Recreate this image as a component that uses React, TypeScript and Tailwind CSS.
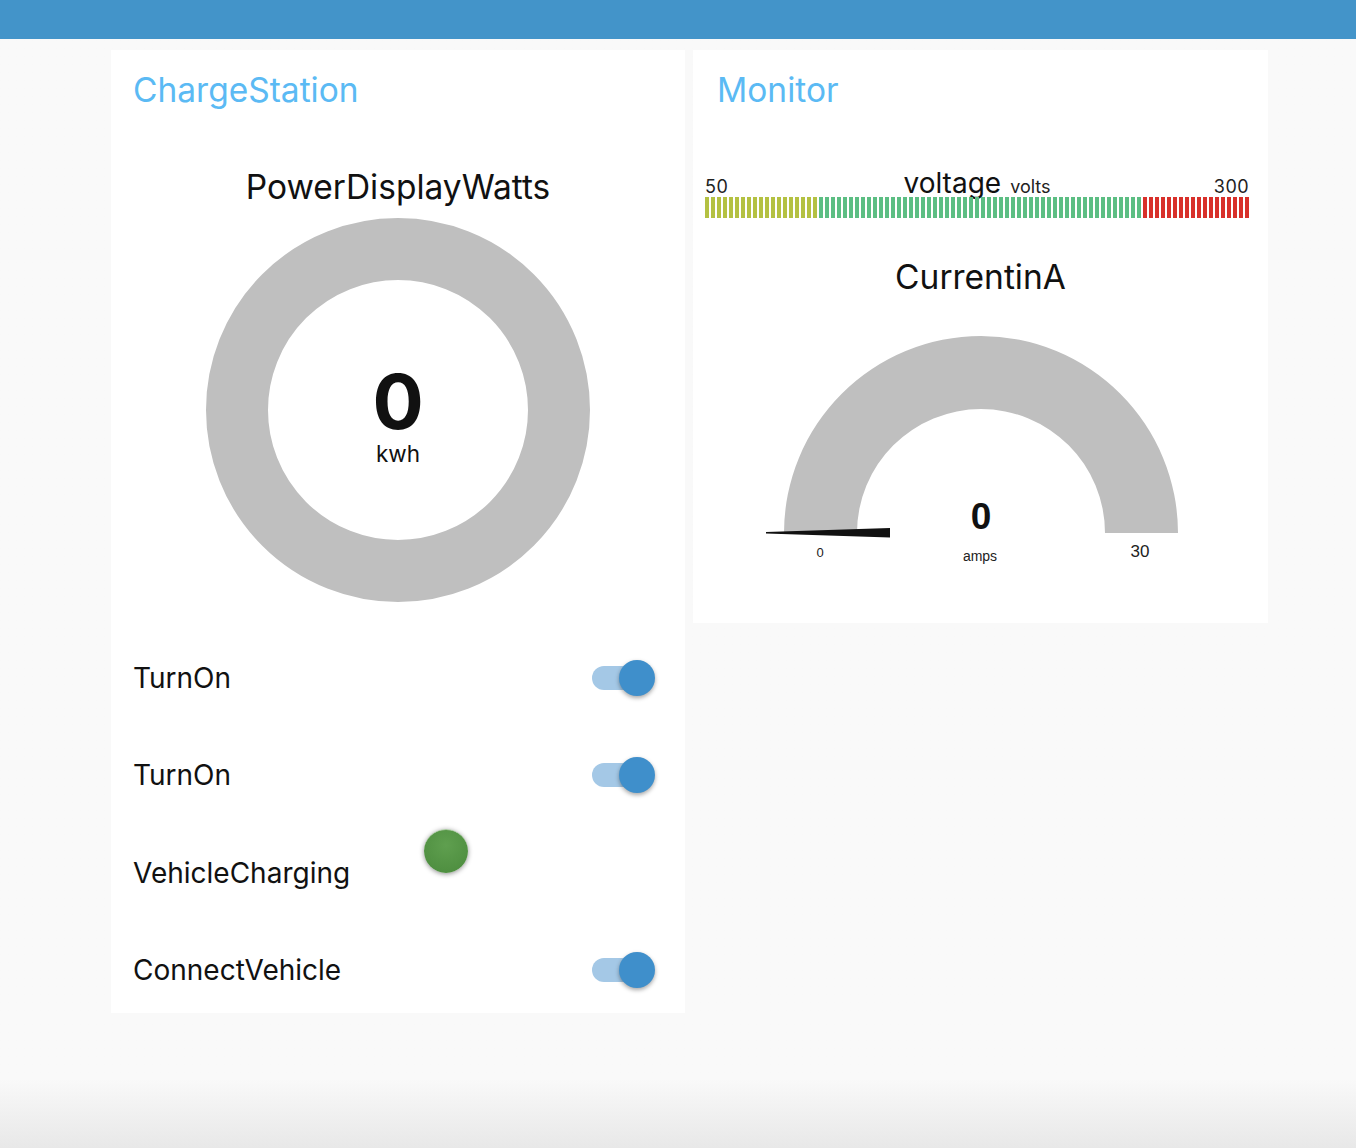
import React from "react";

// dashboard: charge station + monitor cards

const SEGMENTS = Array.from({ length: 91 }, (_, i) =>
  i < 19 ? "bg-[#b4c142]" : i < 73 ? "bg-[#5cbe83]" : "bg-[#d8302a]"
);

function Toggle() {
  return (
    <div className="relative w-[63px] h-[36px] flex items-center">
      <div className="w-[56px] h-[24px] rounded-full bg-[#a4c8e6]" />
      <div className="absolute right-0 top-0 w-[36px] h-[36px] rounded-full bg-[#3f8fcb] shadow-[0_2px_4px_rgba(0,0,0,0.35)]" />
    </div>
  );
}

function Row({ label, children }: { label: string; children?: React.ReactNode }) {
  return (
    <div className="h-[97.5px] flex items-center justify-between pl-[22px] pr-[30px]">
      <span className="text-[28px] leading-[34px] text-[#111]">{label}</span>
      {children}
    </div>
  );
}

export default function App() {
  return (
    <div
      className="h-[1148px] w-full bg-linear-to-b from-[#f9f9f9] from-[94%] to-[#e8e8e8] overflow-hidden"
      style={{ fontFamily: "Inter, 'Liberation Sans', sans-serif" }}
    >
      <div className="h-[39px] bg-[#4394c9]" />

      <div className="flex gap-[8px] pl-[111px] pt-[11px] items-start">
        {/* ChargeStation */}
        <section className="w-[574px] h-[963px] bg-white flex flex-col">
          <h2 className="mt-[20px] h-[40px] leading-[40px] pl-[22px] text-[33.5px] text-[#5bbaf4]">
            ChargeStation
          </h2>
          <h3 className="mt-[57px] h-[40px] leading-[40px] text-center text-[33.5px] text-[#111]">
            PowerDisplayWatts
          </h3>
          <div className="mt-[11px] flex justify-center">
            <svg width="384" height="384" viewBox="0 0 384 384">
              <circle cx="192" cy="192" r="161" fill="none" stroke="#bfbfbf" strokeWidth="62" />
              <text
                x="192"
                y="211"
                textAnchor="middle"
                fontSize="76"
                fontWeight="700"
                fill="#111"
                fontFamily="Inter, 'Liberation Sans', sans-serif"
              >
                0
              </text>
              <text
                x="192"
                y="244"
                textAnchor="middle"
                fontSize="22.5"
                fill="#111"
                fontFamily="Inter, 'Liberation Sans', sans-serif"
              >
                kwh
              </text>
            </svg>
          </div>

          <div className="mt-[27px] flex flex-col">
            <Row label="TurnOn">
              <Toggle />
            </Row>
            <Row label="TurnOn">
              <Toggle />
            </Row>
            <div className="h-[97.5px] flex items-center pl-[22px]">
              <span className="w-[291px] text-[28px] leading-[34px] text-[#111]">VehicleCharging</span>
              <div className="mb-[44px] w-[44px] h-[44px] rounded-full bg-[radial-gradient(circle_at_50%_35%,#5f9f4f,#4a8a3c)] shadow-[0_1px_5px_rgba(0,0,0,0.45)] border-t border-[#a9c9a0]" />
            </div>
            <Row label="ConnectVehicle">
              <Toggle />
            </Row>
          </div>
        </section>

        {/* Monitor */}
        <section className="w-[575px] h-[573px] bg-white flex flex-col">
          <h2 className="mt-[20px] h-[40px] leading-[40px] pl-[24px] text-[33.5px] text-[#5bbaf4]">
            Monitor
          </h2>

          <div className="mt-[59px] pl-[12px] pr-[19px]">
            <div className="h-[28px] grid grid-cols-[1fr_auto_1fr] items-baseline leading-none text-[#222]">
              <span className="text-[18px] tracking-wide">50</span>
              <span className="flex items-baseline gap-[9px]">
                <span className="text-[28px] text-[#111]">voltage</span>
                <span className="text-[18px]">volts</span>
              </span>
              <span className="text-[18px] tracking-wide text-right">300</span>
            </div>
            <div className="h-[21px] flex justify-between">
              {SEGMENTS.map((c, i) => (
                <div key={i} className={`w-[4px] h-full ${c}`} />
              ))}
            </div>
          </div>

          <h3 className="mt-[39px] h-[40px] leading-[40px] text-center text-[33.5px] text-[#111]">
            CurrentinA
          </h3>

          <div className="mt-[36px] flex justify-center">
            <svg width="440" height="240" viewBox="0 0 440 240">
              {/* arc: center (220,200), r outer 197 inner 124 */}
              <path
                d="M 23 200 A 197 197 0 0 1 417 200 L 344 200 A 124 124 0 0 0 96 200 Z"
                fill="#bfbfbf"
              />
              <polygon points="5,199 129,195 129,204.5 5,200.5" fill="#111" />
              <text
                x="220"
                y="196"
                textAnchor="middle"
                fontSize="37"
                fontWeight="700"
                fill="#111"
                fontFamily="'Liberation Sans', Arial, sans-serif"
              >
                0
              </text>
              <text
                x="219"
                y="228"
                textAnchor="middle"
                fontSize="14"
                fill="#222"
                fontFamily="'Liberation Sans', Arial, sans-serif"
              >
                amps
              </text>
              <text
                x="59"
                y="224"
                textAnchor="middle"
                fontSize="13"
                fill="#222"
                fontFamily="'Liberation Sans', Arial, sans-serif"
              >
                0
              </text>
              <text
                x="379"
                y="224"
                textAnchor="middle"
                fontSize="17"
                fill="#222"
                fontFamily="'Liberation Sans', Arial, sans-serif"
              >
                30
              </text>
            </svg>
          </div>
        </section>
      </div>
    </div>
  );
}
